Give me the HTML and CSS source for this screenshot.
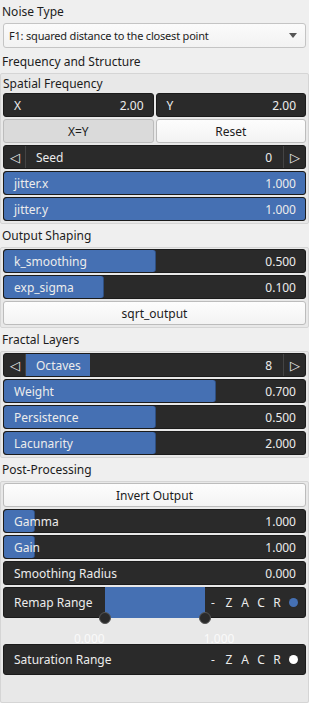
FILE: index.html
```html
<!DOCTYPE html>
<html lang="en">
<head>
  <meta charset="UTF-8">
  <title>Cellular Noise</title>
  <link rel="stylesheet" href="styles.css">
</head>
<body>
  <div class="section-label">Noise Type</div>
  <div class="combo">
    <span>F1: squared distance to the closest point</span>
    <svg class="combo-arrow" width="8" height="5" viewBox="0 0 8 5"><path d="M0 0 L8 0 L4 5 Z" fill="#555"/></svg>
  </div>

  <div class="section-label">Frequency and Structure</div>
  <div class="group">
    <div class="group-title">Spatial Frequency</div>
    <div class="row-pair">
      <div class="field"><span>X</span><span>2.00</span></div>
      <div class="field"><span>Y</span><span>2.00</span></div>
    </div>
    <div class="row-pair">
      <button class="btn checked">X=Y</button>
      <button class="btn">Reset</button>
    </div>
    <div class="spin">
      <span class="spin-arrow">&#9665;</span>
      <div class="spin-body"><span>Seed</span><span>0</span></div>
      <span class="spin-arrow right">&#9655;</span>
    </div>
    <div class="slider"><div class="fill" style="width: 100%"></div><span>jitter.x</span><span>1.000</span></div>
    <div class="slider"><div class="fill" style="width: 100%"></div><span>jitter.y</span><span>1.000</span></div>
  </div>

  <div class="section-label">Output Shaping</div>
  <div class="group">
    <div class="slider"><div class="fill" style="width: 50%"></div><span>k_smoothing</span><span>0.500</span></div>
    <div class="slider"><div class="fill" style="width: 33%"></div><span>exp_sigma</span><span>0.100</span></div>
    <button class="btn">sqrt_output</button>
  </div>

  <div class="section-label">Fractal Layers</div>
  <div class="group">
    <div class="spin">
      <span class="spin-arrow">&#9665;</span>
      <div class="spin-body"><div class="fill" style="width: 25%"></div><span>Octaves</span><span>8</span></div>
      <span class="spin-arrow right">&#9655;</span>
    </div>
    <div class="slider"><div class="fill" style="width: 70%"></div><span>Weight</span><span>0.700</span></div>
    <div class="slider"><div class="fill" style="width: 50%"></div><span>Persistence</span><span>0.500</span></div>
    <div class="slider"><div class="fill" style="width: 50%"></div><span>Lacunarity</span><span>2.000</span></div>
  </div>

  <div class="section-label">Post-Processing</div>
  <div class="group last">
    <button class="btn">Invert Output</button>
    <div class="slider"><div class="fill" style="width: 10%"></div><span>Gamma</span><span>1.000</span></div>
    <div class="slider"><div class="fill" style="width: 10%"></div><span>Gain</span><span>1.000</span></div>
    <div class="slider"><span>Smoothing Radius</span><span>0.000</span></div>

    <div class="range">
      <span class="range-name">Remap Range</span>
      <div class="range-track">
        <span class="handle left"></span>
        <span class="handle right"></span>
      </div>
      <span class="range-tools"><span>-</span><span>Z</span><span>A</span><span>C</span><span>R</span></span>
      <span class="dot blue"></span>
    </div>
    <div class="range-values"><span class="lo">0.000</span><span class="hi">1.000</span></div>

    <div class="range">
      <span class="range-name">Saturation Range</span>
      <span class="range-tools"><span>-</span><span>Z</span><span>A</span><span>C</span><span>R</span></span>
      <span class="dot white"></span>
    </div>
  </div>
</body>
</html>
```

FILE: styles.css
```css
body {
  font-family: "Noto Sans", sans-serif;
  font-size: 12px;
  color: #1c1c1c;
  background: #efefef;
  margin: 0;
  width: 309px;
  height: 703px;
  display: flex;
  flex-direction: column;
}

.section-label {
  height: 23px;
  line-height: 23px;
  padding-left: 2px;
  flex-shrink: 0;
}

/* Combo box */
.combo {
  height: 23px;
  margin: 0 3px 2px;
  border: 1px solid #c4c4c4;
  border-radius: 3px;
  background: linear-gradient(#fbfbfb, #f2f2f2);
  display: flex;
  align-items: center;
  justify-content: space-between;
  padding: 0 8px 0 5px;
  font-size: 11px;
  letter-spacing: -0.2px;
  flex-shrink: 0;
}

/* Group boxes */
.group {
  background: #e8e8e8;
  border: 1px solid #d5d5d5;
  border-radius: 2px;
  padding: 1px 2px 2px;
  display: flex;
  flex-direction: column;
  gap: 2px;
  flex-shrink: 0;
}

.group.last {
  flex: 1;
}

.group-title {
  height: 19px;
  line-height: 19px;
  margin: -1px 0 -2px;
}

.row-pair {
  display: flex;
  gap: 2px;
}

.row-pair > * {
  flex: 1;
}

/* Dark value fields */
.field,
.slider,
.spin {
  height: 24px;
  box-sizing: border-box;
  background: #2a2a2a;
  border: 1px solid #1b1b1b;
  border-radius: 3px;
  color: #ececec;
}

.field,
.slider {
  display: flex;
  align-items: center;
  justify-content: space-between;
  padding: 0 9px 0 10px;
  position: relative;
  overflow: hidden;
}

.field span,
.slider span,
.spin-body span {
  position: relative;
}

.fill {
  position: absolute;
  left: 0;
  top: 0;
  bottom: 0;
  background: #4570b3;
  border-radius: 3px;
}

.slider .fill {
  border-right: 1px solid #2f4f80;
}

/* Buttons */
.btn {
  height: 24px;
  font-family: inherit;
  font-size: 12px;
  color: #1c1c1c;
  border: 1px solid #bcbcbc;
  border-radius: 3px;
  background: linear-gradient(#fdfdfd, #f3f3f3);
  padding: 0;
}

.btn.checked {
  background: #dadada;
}

/* Spin box with arrows */
.spin {
  display: flex;
  align-items: stretch;
}

.spin-arrow {
  width: 21px;
  display: flex;
  align-items: center;
  justify-content: center;
  font-size: 13px;
  border-right: 1px solid #444;
}

.spin-arrow.right {
  border-right: none;
  border-left: 1px solid #444;
}

.spin-body {
  flex: 1;
  position: relative;
  display: flex;
  align-items: center;
  justify-content: space-between;
  padding: 0 11px 0 10px;
}

.spin-body .fill {
  border-radius: 0;
}

/* Range sliders */
.range {
  height: 31px;
  box-sizing: border-box;
  background: #2a2a2a;
  border: 1px solid #1b1b1b;
  border-radius: 3px;
  color: #ececec;
  display: flex;
  align-items: center;
  padding: 0 7px 0 10px;
}

.range-name {
  flex: 1;
  white-space: nowrap;
}

.range-track {
  width: 100px;
  align-self: stretch;
  position: relative;
  background: #4570b3;
  margin: -1px 0;
}

.handle {
  position: absolute;
  bottom: -6px;
  width: 10px;
  height: 10px;
  border-radius: 50%;
  background: #2a2a2a;
  border: 1px solid #555;
}

.handle.left {
  left: -6px;
}

.handle.right {
  left: 94px;
}

.range-tools {
  display: flex;
}

.range-tools span {
  width: 16px;
  text-align: center;
}

.dot {
  width: 9px;
  height: 9px;
  border-radius: 50%;
  margin-left: 4px;
}

.dot.blue {
  background: #4570b3;
}

.dot.white {
  background: #ffffff;
}

.range-values {
  height: 22px;
  box-sizing: border-box;
  padding-top: 11px;
  line-height: 16px;
  display: flex;
  color: #fafafa;
}

.range-values .lo {
  margin-left: 71px;
}

.range-values .hi {
  margin-left: 99px;
}
```
